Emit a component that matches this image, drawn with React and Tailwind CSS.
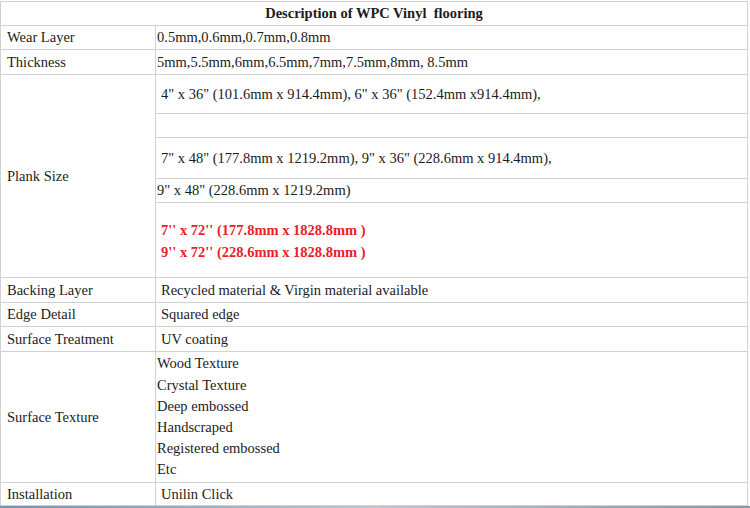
import React from 'react';

const line = 'border-[#d2d2d2]';

const Row = ({ label, h, children, pad = 'pl-[1px]' }) => (
  <div className={`flex border-b ${line} ${h}`}>
    <div className={`w-[155px] shrink-0 border-r ${line} flex items-center pl-[6px]`}>{label}</div>
    <div className={`flex-1 flex items-center ${pad}`}>{children}</div>
  </div>
);

const App = () => {
  return (
    <div className="w-[750px] h-[508px] bg-white overflow-hidden text-[14.5px] leading-[17px] text-[#1c1c1c]" style={{ fontFamily: '"Liberation Serif", "Times New Roman", serif' }}>
      <div className={`mt-[1px] w-[748px] border-t border-l border-r ${line}`}>
        {/* header */}
        <div className={`h-[24px] border-b ${line} flex items-center justify-center font-bold whitespace-pre`}>
          Description of WPC Vinyl  flooring
        </div>

        <Row label="Wear Layer" h="h-[24px]">0.5mm,0.6mm,0.7mm,0.8mm</Row>
        <Row label="Thickness" h="h-[25px]">5mm,5.5mm,6mm,6.5mm,7mm,7.5mm,8mm, 8.5mm</Row>

        {/* plank size block */}
        <div className={`flex border-b ${line}`}>
          <div className={`w-[155px] shrink-0 border-r ${line} flex items-center pl-[6px]`}>Plank Size</div>
          <div className="flex-1 flex flex-col">
            <div className={`h-[39px] border-b ${line} flex items-center pl-[5px]`}>
              4" x 36" (101.6mm x 914.4mm), 6" x 36" (152.4mm x914.4mm),
            </div>
            <div className={`h-[24px] border-b ${line}`}></div>
            <div className={`h-[41px] border-b ${line} flex items-center pl-[5px]`}>
              7" x 48" (177.8mm x 1219.2mm), 9" x 36" (228.6mm x 914.4mm),
            </div>
            <div className={`h-[24px] border-b ${line} flex items-center pl-[1px]`}>
              9" x 48" (228.6mm x 1219.2mm)
            </div>
            <div className="h-[74px] flex flex-col justify-center pl-[5px] pt-[1px] font-bold text-[#e8212b] leading-[22px]">
              <span>7'' x 72'' (177.8mm x 1828.8mm )</span>
              <span>9'' x 72'' (228.6mm x 1828.8mm )</span>
            </div>
          </div>
        </div>

        <Row label="Backing Layer" h="h-[25px]" pad="pl-[5px]">Recycled material &amp; Virgin material available</Row>
        <Row label="Edge Detail" h="h-[24px]" pad="pl-[5px]">Squared edge</Row>
        <Row label="Surface Treatment" h="h-[25px]" pad="pl-[5px]">UV coating</Row>

        <div className={`flex border-b ${line} h-[131px]`}>
          <div className={`w-[155px] shrink-0 border-r ${line} flex items-center pl-[6px]`}>Surface Texture</div>
          <div className="flex-1 flex flex-col justify-center pl-[1px] leading-[21.2px]">
            <span>Wood Texture</span>
            <span>Crystal Texture</span>
            <span>Deep embossed</span>
            <span>Handscraped</span>
            <span>Registered embossed</span>
            <span>Etc</span>
          </div>
        </div>

        <Row label="Installation" h="h-[23px]" pad="pl-[5px]">Unilin Click</Row>
      </div>
      <div className="h-[4px] bg-gradient-to-r from-[#6f95b5] via-[#b9c7d3] to-[#8796a6]"></div>
    </div>
  );
};

export default App;
